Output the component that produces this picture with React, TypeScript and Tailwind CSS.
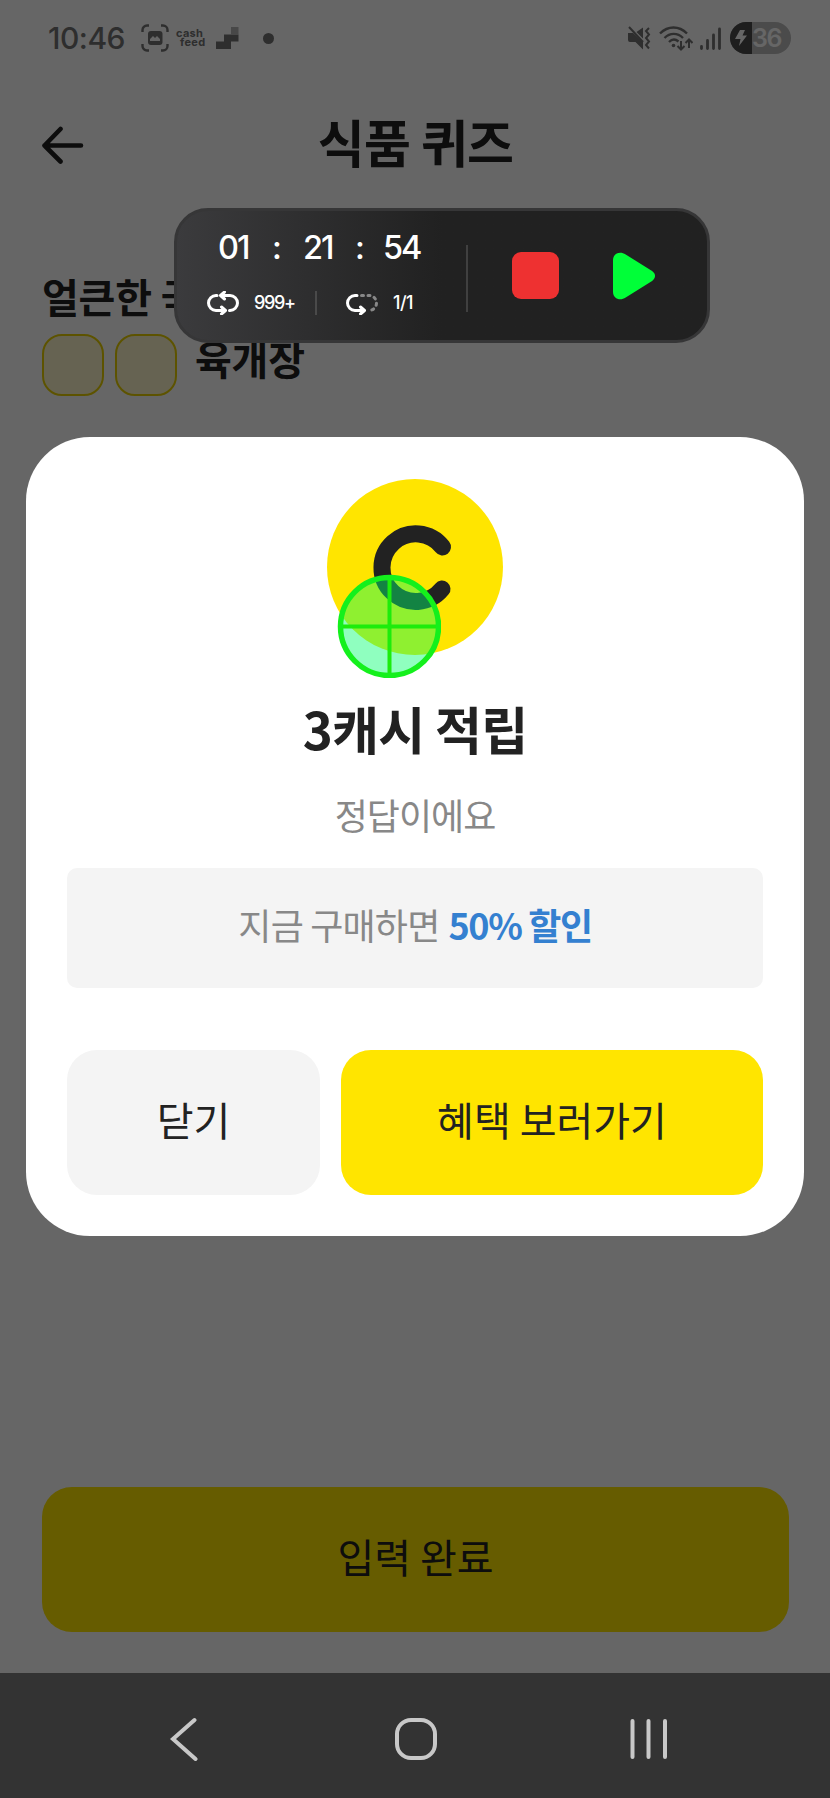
const korean = "font-['Noto_Sans_CJK_KR',sans-serif]"

function StatusBar() {
  return (
    <header className="flex h-[76px] shrink-0 items-center justify-between pl-12 pr-[39px]">
      <div className="flex items-center text-[#737373]">
        <span className="w-[93px] font-['Inter',sans-serif] text-[30px] font-medium leading-none tracking-[-0.5px] whitespace-nowrap">
          10:46
        </span>
        <svg width="28" height="28" viewBox="0 0 28 28" fill="none" className="mr-[7px]">
          <path
            d="M1.500 8V6A4.500 4.500 0 0 1 6 1.500h2M20 1.500h2A4.500 4.500 0 0 1 26.500 6v2M26.500 20v2a4.500 4.500 0 0 1-4.500 4.500h-2M8 26.500H6A4.500 4.500 0 0 1 1.500 22v-2"
            stroke="currentColor"
            strokeWidth="2.4"
          />
          <rect x="7" y="7" width="14.500" height="14" rx="3" fill="currentColor" />
          <path d="M9 17v-2l3-3 2 2 2-2 3 3v2z" fill="#fff" />
        </svg>
        <span className="w-10 font-['Inter',sans-serif] text-[11px] font-bold leading-[9px] tracking-[0.3px]">
          <span className="block h-[9px]">cash</span>
          <span className="block h-[9px] pl-1">feed</span>
        </span>
        <svg width="23" height="23" viewBox="0 0 23 23" className="mr-6">
          <path d="M8 7.500h14.500v7H15V22H0v-7.500h8z" fill="currentColor" />
          <path d="M15 0h7.500v7.500H15z" fill="#b3b3b3" />
        </svg>
        <span className="size-[11px] rounded-full bg-[#737373]" />
      </div>

      <div className="flex items-center text-[#737373]">
        <svg width="24" height="24" viewBox="0 0 24 24" className="mr-2">
          <path d="M1 7h5l10 9v7.500L8.500 16H3a2 2 0 0 1-2-2zM9.500 6 16 1.500v11z" fill="currentColor" />
          <path d="m2 1 14 15" stroke="currentColor" strokeWidth="2" />
          <path d="m22 2-3 3 3 3.500-3 3.500 3 3.500-3 3.500 3 3.500" stroke="currentColor" strokeWidth="2" fill="none" />
        </svg>
        <svg width="34" height="26" viewBox="0 0 34 26" fill="none" stroke="currentColor" strokeWidth="2.400" className="mr-[7px]">
          <path d="M1 8.500C9 .5 20 .5 28 8.500M5.500 13C11 7.500 18.500 7.500 24 13M10 17c3-3 6.500-3 9.500-.5" />
          <circle cx="14.500" cy="20.500" r="1.800" fill="currentColor" stroke="none" />
          <path d="M22 16v8.500m-3.500-3.500 3.500 3.500 3.500-3.500M30 23v-8.500M26.500 18l3.500-3.500 3.500 3.500" strokeWidth="2" />
        </svg>
        <svg width="21" height="23" viewBox="0 0 21 23" stroke="currentColor" strokeWidth="2.800" strokeLinecap="round" className="mr-[9px]">
          <path d="M1.500 19.500v2M7.500 13.500v8M13.500 8v13.500M19.500 2v19.500" />
        </svg>
        <div className="flex h-8 w-[61px] overflow-hidden rounded-full bg-[#bbb]">
          <span className="flex w-[22px] items-center justify-center bg-[#4b4b4b]">
            <svg width="12" height="16" viewBox="0 0 12 16" fill="#fff">
              <path d="M5 0h5L7.500 5.500H12L4 16l1.500-7H0z" />
            </svg>
          </span>
          <span className="font-['Inter',sans-serif] text-[25px] font-semibold leading-8 tracking-[-1.5px] text-white">36</span>
        </div>
      </div>
    </header>
  )
}

function QuizPage() {
  return (
    <div className="flex h-[1673px] flex-col bg-white text-[#222]">
      <StatusBar />
      <div className="flex h-[138px] shrink-0 items-center px-[42px]">
        <svg width="42" height="38" viewBox="0 0 42 38" fill="none" stroke="currentColor" strokeWidth="4.600" strokeLinecap="round" strokeLinejoin="round">
          <path d="M39 19.500H2.500M18.500 3 2.500 19.500l16 16" />
        </svg>
        <h1 className="grow pr-[41px] pb-[8px] text-center text-[51px] font-bold leading-[74px] tracking-[-0.8px]">식품 퀴즈</h1>
      </div>

      <div className="px-[42px] pt-[51px] text-[40px] font-bold leading-[62px] tracking-[-0.2px]">
        <p>얼큰한 국물</p>
        <div className="flex items-start">
          <span className="mt-[7px] mr-[11px] size-[62px] rounded-[20px] border-2 border-[#e8d000] bg-[#fff8cc]" />
          <span className="mt-[7px] mr-[18px] size-[62px] rounded-[20px] border-2 border-[#e8d000] bg-[#fff8cc]" />
          <p>육개장</p>
        </div>
      </div>

      <button className="mr-[41px] ml-[42px] mt-auto mb-[41px] h-[145px] rounded-[30px] bg-[#ffe500] pb-[8px] text-[40px]">
        입력 완료
      </button>
    </div>
  )
}

function RewardDialog() {
  return (
    <section className="absolute top-[437px] left-[26px] flex h-[799px] w-[778px] flex-col items-center rounded-[64px] bg-white px-[41px] pt-[42px] text-[#222]">
      <svg width="176" height="176" viewBox="0 0 176 176" fill="none">
        <circle cx="88" cy="88" r="88" fill="#ffe500" />
        <path d="M115.500 68A33.800 33.800 0 1 0 115 110" stroke="#222" strokeWidth="17" strokeLinecap="round" />
      </svg>
      <h2 className="mt-[36px] text-[51px] font-bold leading-[74px] tracking-[-0.8px]">3캐시 적립</h2>
      <p className="mt-[23px] text-[36px] leading-[52px] tracking-[-1px] text-[#888]">정답이에요</p>
      <div className="mt-[28px] flex h-[120px] w-full items-center justify-center gap-[9px] rounded-[10px] bg-[#f4f4f4] pb-[8px] text-[36px] tracking-[-0.8px] text-[#888]">
        <span>지금 구매하면</span>
        <strong className="tracking-[-1.4px] text-[#3480d0]">50% 할인</strong>
      </div>
      <div className="mt-[62px] flex h-[145px] w-full gap-[21px] text-[40px]">
        <button className="w-[253px] rounded-[30px] bg-[#f4f4f4] pb-[8px]">닫기</button>
        <button className="grow rounded-[30px] bg-[#ffe500] pb-[8px]">혜택 보러가기</button>
      </div>
    </section>
  )
}

function RecorderPanel() {
  return (
    <aside className="absolute top-[208px] left-[174px] flex h-[135px] w-[536px] items-center rounded-[34px] border-[3px] border-[#363637] bg-linear-to-r from-[#3b3b3d] to-[#212121] to-50% font-['Inter',sans-serif] font-medium text-white">
      <div className="w-[289px] pb-[2px] pl-[30px]">
        <div className="grid h-[40px] grid-cols-[54px_29px_54px_28px_50px] pl-[11px] text-[32.500px] leading-[28px] tracking-[-2px]">
          <span>01</span>
          <span>:</span>
          <span className="pl-[2px]">21</span>
          <span>:</span>
          <span>54</span>
        </div>
        <div className="mt-[17px] flex h-6 items-center text-[18px] leading-none tracking-[-1.3px]">
          <svg width="32" height="24" viewBox="0 0 32 24" fill="none" stroke="currentColor" strokeWidth="3" strokeLinecap="round" strokeLinejoin="round">
            <path d="M10 4.500H9a7.500 7.500 0 0 0 0 15h9M14.500 16l4 3.500-4 3.500M22.500 19.500h.500a7.500 7.500 0 0 0 0-15h-9M17.500 1l-4 3.500 4 3.500" />
          </svg>
          <span className="ml-[15px] w-[61px]">999+</span>
          <span className="h-6 w-0.5 bg-[#4a4a4a]" />
          <svg width="32" height="24" viewBox="0 0 32 24" fill="none" stroke="currentColor" strokeWidth="3" strokeLinecap="round" strokeLinejoin="round" className="ml-[29px]">
            <path d="M11 4.500H9a7.500 7.500 0 0 0 0 15h9M14.500 16l4 3.500-4 3.500" />
            <path d="M15.500 4.500H23a7.500 7.500 0 0 1 0 15" stroke="#888" strokeDasharray="2 4.500" />
          </svg>
          <span className="ml-[15px] tracking-[-0.5px]">1/1</span>
        </div>
      </div>
      <span className="mt-[5px] h-[67px] w-0.5 bg-[#404040]" />
      <span className="ml-[44px] size-[47px] rounded-[9px] bg-[#ee3131]" />
      <svg width="43" height="48" viewBox="0 0 44 48" className="ml-[54px]">
        <path d="M0 8C0 1 7-2 13 2L40 19c4 3 4 7 0 10L13 46C7 50 0 47 0 40z" fill="#00ff38" />
      </svg>
    </aside>
  )
}

function TouchPointer() {
  return (
    <svg width="104" height="104" viewBox="0 0 104 104" className="absolute top-[574px] left-[337px]">
      <circle cx="52.500" cy="52.500" r="49" fill="#00ff6e" fillOpacity="0.44" />
      <path d="M52.500 4v97M4 52.500h97" stroke="#1dec0c" strokeWidth="4" />
      <circle cx="52.500" cy="52.500" r="49" fill="none" stroke="#14f01c" strokeWidth="5.500" />
    </svg>
  )
}

function NavigationBar() {
  return (
    <nav className="relative flex h-[125px] items-center bg-[#333] pt-[7px]">
      <svg width="830" height="44" viewBox="0 0 830 44" fill="none" stroke="#c8c8c8" strokeWidth="4" strokeLinecap="round">
        <path d="M194.500 3 173 22l22.500 20" />
        <rect x="397" y="3" width="38" height="38" rx="14" />
        <path d="M632.500 4v36M648.500 4v36M665 4v36" />
      </svg>
    </nav>
  )
}

export default function App() {
  return (
    <main className={`relative h-[1798px] w-[830px] overflow-hidden ${korean}`}>
      <QuizPage />
      <div className="absolute inset-0 bg-black/60" />
      <NavigationBar />
      <RewardDialog />
      <RecorderPanel />
      <TouchPointer />
    </main>
  )
}
